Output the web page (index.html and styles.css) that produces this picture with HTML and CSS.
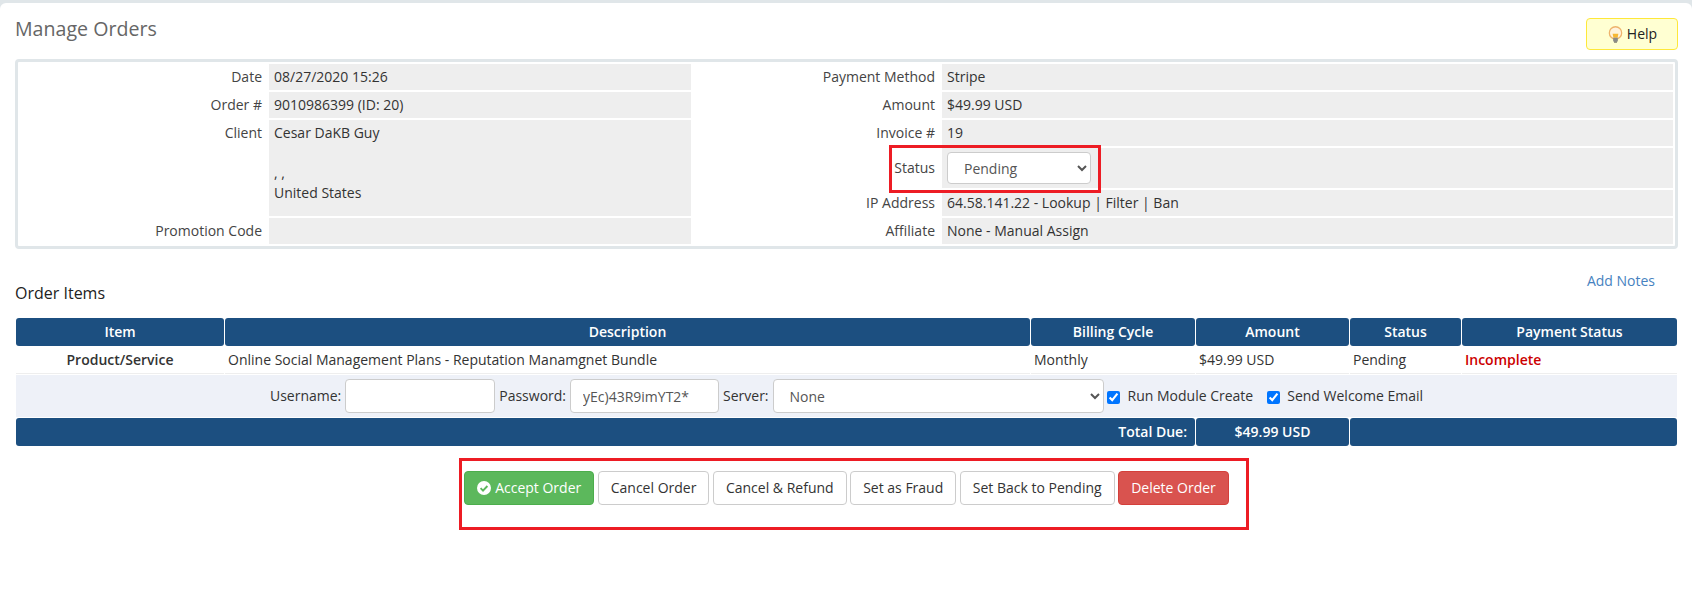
FILE: index.html
```html
<!DOCTYPE html>
<html lang="en">
<head>
<meta charset="utf-8">
<title>Manage Orders</title>
<link rel="stylesheet" href="styles.css">
</head>
<body>
<main class="panel">
  <header class="page-head">
    <h1 class="page-title">Manage Orders</h1>
    <a class="help-btn" href="#">
      <svg class="help-icon" viewBox="0 0 16 16" width="17" height="17" aria-hidden="true">
        <circle cx="8" cy="6.5" r="5.8" fill="#fff3dc" stroke="#eeb36c" stroke-width="1.2"/>
        <path d="M5.3 7.2h5.4l-.7 3.8H6z" fill="#f7b733"/>
        <rect x="5.8" y="11" width="4.4" height="3.6" fill="#8a8a8a"/>
        <rect x="6.6" y="14.6" width="2.8" height="1" fill="#555"/>
      </svg>
      Help
    </a>
  </header>

  <section class="summary">
    <table class="summary-table">
      <colgroup>
        <col class="col-label"><col class="col-left"><col class="col-label"><col class="col-right">
      </colgroup>
      <tr>
        <td class="lbl">Date</td><td class="val">08/27/2020 15:26</td>
        <td class="lbl">Payment Method</td><td class="val">Stripe</td>
      </tr>
      <tr>
        <td class="lbl">Order #</td><td class="val">9010986399 (ID: 20)</td>
        <td class="lbl">Amount</td><td class="val">$49.99 USD</td>
      </tr>
      <tr>
        <td class="lbl" rowspan="3">Client</td>
        <td class="val" rowspan="3">Cesar DaKB Guy<br><br>, ,<br>United States</td>
        <td class="lbl">Invoice #</td><td class="val">19</td>
      </tr>
      <tr class="status-row">
        <td class="lbl">Status</td>
        <td class="val">
          <span class="status-wrap">
            <select class="field status-select"><option>Pending</option></select>
            <span class="mark mark-status"></span>
          </span>
        </td>
      </tr>
      <tr>
        <td class="lbl">IP Address</td>
        <td class="val">64.58.141.22 - <a class="plain" href="#">Lookup</a> | <a class="plain" href="#">Filter</a> | <a class="plain" href="#">Ban</a></td>
      </tr>
      <tr>
        <td class="lbl">Promotion Code</td><td class="val"></td>
        <td class="lbl">Affiliate</td><td class="val">None - <a class="plain" href="#">Manual Assign</a></td>
      </tr>
    </table>
  </section>

  <div class="items-head">
    <h2 class="items-title">Order Items</h2>
    <a class="notes-link" href="#">Add Notes</a>
  </div>

  <table class="items">
    <colgroup>
      <col class="c1"><col class="c2"><col class="c3"><col class="c4"><col class="c5"><col class="c6">
    </colgroup>
    <thead>
      <tr>
        <th>Item</th><th>Description</th><th>Billing Cycle</th><th>Amount</th><th>Status</th><th>Payment Status</th>
      </tr>
    </thead>
    <tbody>
      <tr class="item-row">
        <td class="item-type">Product/Service</td>
        <td>Online Social Management Plans - Reputation Manamgnet Bundle</td>
        <td>Monthly</td>
        <td>$49.99 USD</td>
        <td>Pending</td>
        <td class="incomplete">Incomplete</td>
      </tr>
      <tr class="config-row">
        <td colspan="6">
          <div class="config">
            <label class="config-label" for="u">Username:</label>
            <input id="u" class="field input-user" type="text">
            <label class="config-label" for="p">Password:</label>
            <input id="p" class="field input-pass" type="text" value="yEc)43R9imYT2*">
            <label class="config-label" for="s">Server:</label>
            <select id="s" class="field server-select"><option>None</option></select>
            <label class="check check-first"><input type="checkbox" checked>Run Module Create</label>
            <label class="check"><input type="checkbox" checked>Send Welcome Email</label>
          </div>
        </td>
      </tr>
    </tbody>
    <tfoot>
      <tr>
        <th class="total-label" colspan="3">Total Due:</th>
        <th>$49.99 USD</th>
        <th colspan="2"></th>
      </tr>
    </tfoot>
  </table>

  <div class="actions">
    <div class="action-group">
      <button class="btn btn-accept" type="button">
        <svg class="btn-icon" viewBox="0 0 14 14" width="14" height="14" aria-hidden="true">
          <circle cx="7" cy="7" r="7" fill="#fff"/>
          <path d="M3.6 7.2l2.4 2.4 4.4-4.6" fill="none" stroke="#5cb85c" stroke-width="1.9"/>
        </svg>Accept Order</button>
      <button class="btn" type="button">Cancel Order</button>
      <button class="btn" type="button">Cancel &amp; Refund</button>
      <button class="btn" type="button">Set as Fraud</button>
      <button class="btn" type="button">Set Back to Pending</button>
      <button class="btn btn-delete" type="button">Delete Order</button>
      <span class="mark mark-actions"></span>
    </div>
  </div>
</main>
</body>
</html>
```

FILE: styles.css
```css
* { box-sizing: border-box; }

html, body { height: 100%; }

body {
  margin: 0;
  background: #e0e6e9;
  color: #333;
  font-family: "Open Sans", sans-serif;
  font-size: 14px;
  line-height: 20px;
}

a { text-decoration: none; }

.panel {
  margin-top: 3px;
  min-height: 589px;
  padding: 15px 14px 0 15px;
  background: #fff;
  border-radius: 6px 6px 0 0;
}

.page-head {
  display: flex;
  justify-content: space-between;
  align-items: flex-start;
  height: 32px;
  margin-bottom: 9px;
}

.page-title {
  margin: 0;
  color: #666;
  font-size: 19.6px;
  font-weight: 400;
  line-height: 22px;
}

.help-btn {
  display: flex;
  align-items: center;
  justify-content: center;
  gap: 3px;
  width: 92px;
  height: 32px;
  border: 1px solid #fee83a;
  border-radius: 4px;
  background: #ffffd2;
  color: #222;
}

.help-icon { flex: none; }

.summary {
  border: 3px solid #e0e6e9;
  border-radius: 4px;
}

.summary-table {
  width: 100%;
  table-layout: fixed;
  border-collapse: separate;
  border-spacing: 2px;
}

.col-label { width: 247px; }
.col-left { width: 422px; }
.col-right { width: 731px; }

.summary-table td {
  padding: 3px 5px;
  vertical-align: top;
}

.lbl { text-align: right; color: #444; }

.val { background: #eee; }

.status-row td { height: 40px; vertical-align: middle; padding: 0 5px; }

.status-wrap {
  position: relative;
  display: block;
  width: 144px;
}

.plain { color: #333; }

.field {
  border: 1px solid #ccc;
  border-radius: 4px;
  background: #fff;
  color: #555;
  font-family: inherit;
  font-size: 14px;
}

.status-select {
  display: block;
  width: 144px;
  height: 32px;
  padding: 0 12px;
}

.mark {
  position: absolute;
  border: 3px solid #ed1c24;
  pointer-events: none;
}

.mark-status { top: -7px; left: -58px; right: -10px; bottom: -9px; }

.items-head {
  display: flex;
  justify-content: space-between;
  align-items: flex-start;
  height: 54px;
  margin-bottom: 15px;
}

.items-title {
  margin: 34px 0 0;
  color: #222;
  font-size: 16px;
  font-weight: 400;
  line-height: 20px;
}

.notes-link {
  margin: 22px 23px 0 0;
  color: #4682c0;
}

.items {
  width: 100%;
  table-layout: fixed;
  border-collapse: separate;
  border-spacing: 1px 0;
}

.c1 { width: 208px; }
.c2 { width: 805px; }
.c3 { width: 164px; }
.c4 { width: 153px; }
.c5 { width: 111px; }
.c6 { width: 215px; }

.items th {
  height: 28px;
  padding: 0 4px;
  border-radius: 3px;
  background: #1c4f80;
  color: #fff;
  font-weight: 600;
  text-align: center;
}

.items th.total-label { padding-right: 8px; text-align: right; }

.item-row td {
  height: 28px;
  padding: 0 3px;
  border-bottom: 1px solid #eee;
}

.item-row .item-type { font-weight: 600; text-align: center; }

.incomplete { color: #c00; font-weight: 600; }

.config-row td {
  height: 44px;
  padding: 0;
  border-top: 1px solid #fff;
  border-bottom: 1px solid #fff;
  background: #eef1f8;
}

.config {
  display: flex;
  align-items: center;
  justify-content: center;
  gap: 4px;
}

.input-user { width: 150px; height: 34px; padding: 0 12px; }
.input-pass { width: 149px; height: 34px; padding: 0 12px; }
.server-select { width: 331px; height: 34px; padding: 0 12px; }

.check {
  display: flex;
  align-items: center;
  gap: 7px;
  margin-left: 10px;
}

.check-first { gap: 8px; margin-left: -1px; }

.check input { width: 13px; height: 13px; margin: 2px 0 0; }

.actions {
  display: flex;
  justify-content: center;
  margin-top: 25px;
}

.action-group {
  position: relative;
  display: flex;
  gap: 3.5px;
}

.btn {
  display: flex;
  align-items: center;
  gap: 4px;
  height: 34px;
  padding: 0 12px 1px;
  border: 1px solid #ccc;
  border-radius: 4px;
  background: #fff;
  color: #333;
  font-family: inherit;
  font-size: 14px;
}

.btn-accept { border-color: #4cae4c; background: #5cb85c; color: #fff; }
.btn-delete { border-color: #d43f3a; background: #d9534f; color: #fff; }

.btn-icon { flex: none; }

.mark-actions { top: -13px; left: -5px; right: -20px; bottom: -25px; }
```
